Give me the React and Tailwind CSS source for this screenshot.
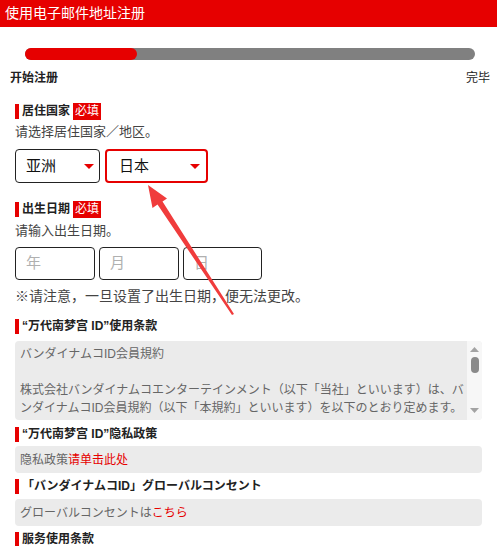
import React from 'react';

const RED = 'bg-[#e60000]';

const SectionLabel = ({ children, required, jp }) => (
  <div className="flex items-center h-[17px]">
    <span className={`w-[4px] h-[15px] ${RED}`}></span>
    <span
      className="ml-[3px] text-[12px] font-bold text-[#222] leading-[17px]"
      style={jp ? { fontFamily: '"Liberation Sans", "Noto Sans CJK JP", sans-serif' } : undefined}
    >
      {children}
    </span>
    {required && (
      <span className={`ml-[3px] h-[17px] px-[2px] text-[12px] leading-[17px] text-white ${RED}`}>必填</span>
    )}
  </div>
);

const Caret = () => (
  <svg width="10" height="5" viewBox="0 0 10 5" className="shrink-0">
    <polygon points="0,0 10,0 5,5" fill="#e60000" />
  </svg>
);

const termsLines = [
  'バンダイナムコID会員規約',
  '',
  '株式会社バンダイナムコエンターテインメント（以下「当社」といいます）は、バ',
  'ンダイナムコID会員規約（以下「本規約」といいます）を以下のとおり定めます。',
];

const App = () => {
  return (
    <div
      className="relative w-[497px] h-[546px] overflow-hidden bg-white text-[#333]"
      style={{ fontFamily: '"Liberation Sans", "Noto Sans CJK SC", sans-serif' }}
    >
      {/* 标题栏 */}
      <div className={`h-[27px] flex items-center pl-[5px] text-[14px] text-white ${RED}`}>
        使用电子邮件地址注册
      </div>

      <div className="px-[15px]">
        {/* 进度条 */}
        <div className="mt-[21px] ml-[10px] mr-[7px] h-[12px] rounded-full bg-[#808080]">
          <div className={`w-[112px] h-[12px] rounded-full ${RED}`}></div>
        </div>
        <div className="-mx-[5px] mt-[10px] flex justify-between text-[12px] leading-[16px] text-[#222]">
          <span className="font-bold">开始注册</span>
          <span className="mr-[-3px]">完毕</span>
        </div>

        {/* 居住国家 */}
        <div className="mt-[17px]">
          <SectionLabel required>居住国家</SectionLabel>
        </div>
        <p className="mt-[2px] text-[13px] leading-[20px] text-[#444]">请选择居住国家／地区。</p>
        <div className="mt-[7px] flex gap-[5px]">
          <div className="w-[85px] h-[34px] flex items-center justify-between pl-[10px] pr-[5px] border border-[#222] rounded-[4px] text-[15px] text-[#111]">
            <span>亚洲</span>
            <Caret />
          </div>
          <div className="w-[103px] h-[34px] flex items-center justify-between pl-[12px] pr-[6px] border-2 border-[#e60000] rounded-[4px] text-[15px] text-[#111]">
            <span>日本</span>
            <Caret />
          </div>
        </div>

        {/* 出生日期 */}
        <div className="mt-[18px]">
          <SectionLabel required>出生日期</SectionLabel>
        </div>
        <p className="mt-[3px] text-[13px] leading-[20px] text-[#444]">请输入出生日期。</p>
        <div className="mt-[6px] flex gap-[4px]">
          {['年', '月', '日'].map((p, i) => (
            <div
              key={p}
              className={`${i === 2 ? 'w-[79px]' : 'w-[80px]'} h-[33px] flex items-center pl-[10px] border border-[#222] rounded-[4px] text-[15px] text-[#b0b0b0]`}
            >
              {p}
            </div>
          ))}
        </div>
        <p className="mt-[6px] text-[14px] leading-[20px] text-[#444]">※请注意，一旦设置了出生日期，便无法更改。</p>

        {/* 使用条款 */}
        <div className="mt-[12px]">
          <SectionLabel>“万代南梦宫 ID”使用条款</SectionLabel>
        </div>
        <div className="mt-[6px] h-[79px] flex rounded-[4px] bg-[#ebebeb] overflow-hidden">
          <div
            className="flex-1 overflow-hidden pl-[5px] pt-[4px] text-[12px] leading-[18px] text-[#666]"
            style={{ fontFamily: '"Liberation Sans", "Noto Sans CJK JP", sans-serif' }}
          >
            {termsLines.map((line, i) => (
              <div key={i} className="whitespace-nowrap h-[18px]">{line}</div>
            ))}
          </div>
          <div className="w-[15px] bg-[#f7f7f7] flex flex-col items-center pt-[6px]">
            <svg width="9" height="5" viewBox="0 0 9 5"><polygon points="4.5,0 9,5 0,5" fill="#a3a3a3" /></svg>
            <div className="mt-[5px] w-[8px] h-[16px] rounded-full bg-[#8a8a8a]"></div>
            <div className="flex-1"></div>
            <svg width="9" height="5" viewBox="0 0 9 5" className="mb-[7px]"><polygon points="0,0 9,0 4.5,5" fill="#a3a3a3" /></svg>
          </div>
        </div>

        {/* 隐私政策 */}
        <div className="mt-[6px]">
          <SectionLabel>“万代南梦宫 ID”隐私政策</SectionLabel>
        </div>
        <div className="mt-[3px] h-[27px] flex items-center pl-[5px] rounded-[4px] bg-[#ebebeb] text-[12px] text-[#666]">
          隐私政策<span className="text-[#e60000]">请单击此处</span>
        </div>

        {/* グローバルコンセント */}
        <div className="mt-[5px]">
          <SectionLabel jp>「バンダイナムコID」グローバルコンセント</SectionLabel>
        </div>
        <div
          className="mt-[4px] h-[27px] flex items-center pl-[5px] rounded-[4px] bg-[#ebebeb] text-[12px] text-[#666]"
          style={{ fontFamily: '"Liberation Sans", "Noto Sans CJK JP", sans-serif' }}
        >
          グローバルコンセントは<span className="text-[#e60000]">こちら</span>
        </div>

        {/* 服务使用条款 */}
        <div className="mt-[5px]">
          <SectionLabel>服务使用条款</SectionLabel>
        </div>
      </div>

      {/* 标注箭头 */}
      <svg className="absolute left-0 top-0 pointer-events-none" width="497" height="546" viewBox="0 0 497 546">
        <polygon
          points="148,185 152.5,208 157.5,204.5 232,315 234,314 162.5,201.5 167,198.5"
          fill="#f03c3c"
        />
      </svg>
    </div>
  );
};

export default App;
